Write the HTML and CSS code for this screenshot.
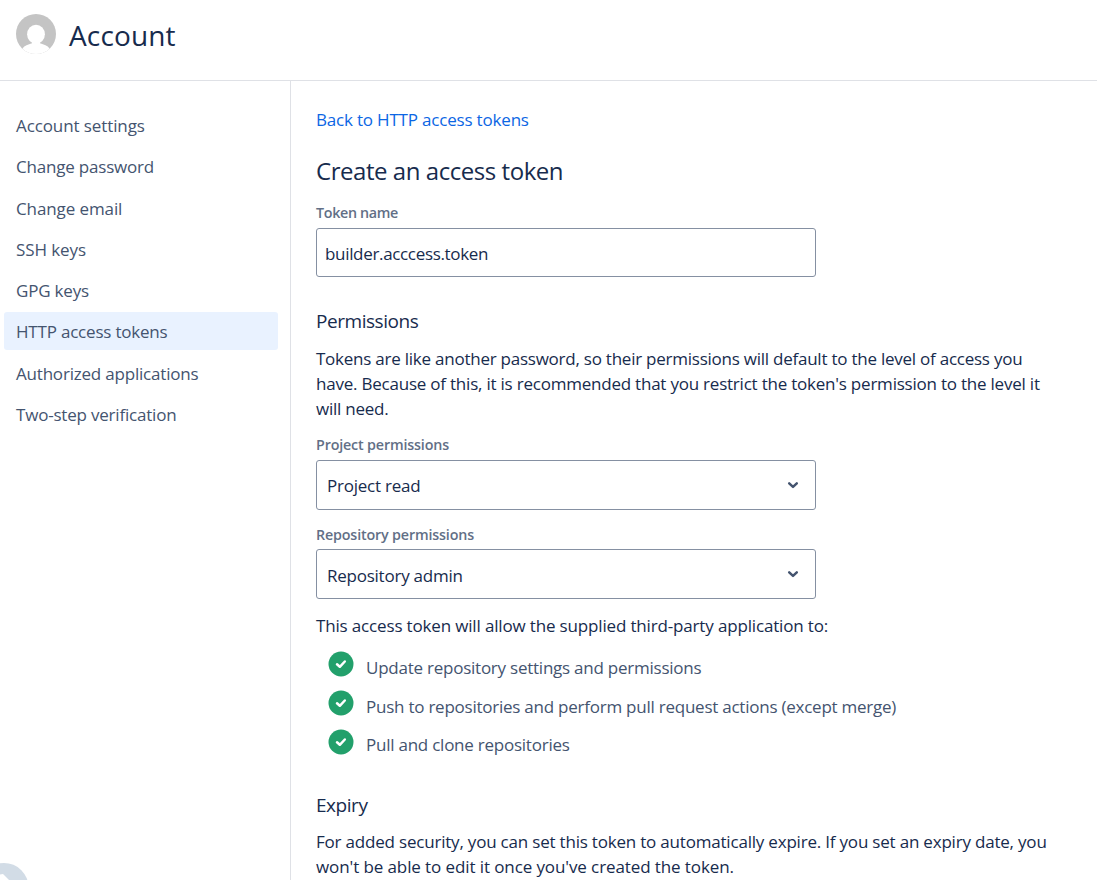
FILE: index.html
```
<!DOCTYPE html>
<html lang="en">
<head>
<meta charset="utf-8">
<title>Account</title>
<link rel="stylesheet" href="styles.css">
</head>
<body>
<header class="page-header">
  <svg class="avatar" viewBox="0 0 40 40"><defs><clipPath id="round"><circle cx="20" cy="20" r="20"/></clipPath></defs><g clip-path="url(#round)"><rect width="40" height="40" fill="#c4c4c4"/><ellipse cx="20" cy="20.300" rx="8.900" ry="9.600" fill="#fff"/><path d="M16 27v2.300C12 30.500 8.500 31.500 6.500 34.500L2 42h36l-4.500-7.500C31.500 31.500 28 30.500 24 29.300V27z" fill="#fff"/></g></svg>
  <h1 class="page-title">Account</h1>
</header>
<div class="page-body">
  <nav class="sidebar">
    <a class="nav-item wide">Account settings</a>
    <a class="nav-item">Change password</a>
    <a class="nav-item wide">Change email</a>
    <a class="nav-item wide">SSH keys</a>
    <a class="nav-item">GPG keys</a>
    <a class="nav-item selected">HTTP access tokens</a>
    <a class="nav-item">Authorized applications</a>
    <a class="nav-item">Two-step verification</a>
  </nav>
  <main class="content">
    <a class="back">Back to HTTP access tokens</a>
    <h2 class="title">Create an access token</h2>
    <label class="label token-label" for="token">Token name</label>
    <input class="field" id="token" type="text" value="builder.acccess.token" spellcheck="false">
    <h3 class="subtitle permissions">Permissions</h3>
    <p class="text intro">Tokens are like another password, so their permissions will default to the level of access you<br><span class="wider">have. Because of this, it is recommended that you restrict the token's permission to the level it</span><br>will need.</p>
    <div class="label">Project permissions</div>
    <div class="select"><span>Project read</span><svg class="chevron" viewBox="0 0 12 8"><path d="M2.200 2.300 6 5.900 9.800 2.300"/></svg></div>
    <div class="label">Repository permissions</div>
    <div class="select low"><span>Repository admin</span><svg class="chevron" viewBox="0 0 12 8"><path d="M2.200 2.300 6 5.900 9.800 2.300"/></svg></div>
    <p class="text allow">This access token will allow the supplied third-party application to:</p>
    <ul class="grants">
      <li><svg class="tick" viewBox="0 0 26 26"><circle cx="13" cy="13" r="12.500"/><path d="m9 13.300 2.800 2.500 5-5.300"/></svg><span>Update repository settings and permissions</span></li>
      <li><svg class="tick" viewBox="0 0 26 26"><circle cx="13" cy="13" r="12.500"/><path d="m9 13.300 2.800 2.500 5-5.300"/></svg><span>Push to repositories and perform pull request actions (except merge)</span></li>
      <li><svg class="tick" viewBox="0 0 26 26"><circle cx="13" cy="13" r="12.500"/><path d="m9 13.300 2.800 2.500 5-5.300"/></svg><span>Pull and clone repositories</span></li>
    </ul>
    <h3 class="subtitle">Expiry</h3>
    <p class="text expiry">For added security, you can set this token to automatically expire. If you set an expiry date, you<br><span class="last-line">won't be able to edit it once you've created the token.</span></p>
  </main>
</div>
<svg class="corner" viewBox="0 0 30 18"><circle cx="4" cy="25.500" r="24.500" fill="#d2dce6"/><path d="M-5 18 0 12.500 3 12 9 18z" fill="#fff"/></svg>
</body>
</html>
```

FILE: styles.css
```
* { box-sizing: border-box; }
html, body { height: 100%; overflow: hidden; }
body {
  margin: 0;
  background: #fff;
  color: #172b4d;
  font: 17px/25px "Open Sans", "Noto Sans", sans-serif;
  letter-spacing: -0.24px;
  display: flex;
  flex-direction: column;
}
h1, h2, h3, p, ul { margin: 0; padding: 0; font-weight: 400; }
.page-header {
  height: 81px;
  flex: none;
  display: flex;
  align-items: flex-start;
  gap: 13px;
  padding: 14px 16px 0;
  border-bottom: 1px solid #dfe1e6;
}
.avatar { width: 40px; height: 40px; }
.page-title { font-size: 28px; line-height: 42px; letter-spacing: 0.15px; }
.page-body { flex: 1; display: flex; min-height: 0; }
.sidebar {
  width: 291px;
  flex: none;
  padding: 25px 12px 0 4px;
  border-right: 1px solid #dfe1e6;
  display: flex;
  flex-direction: column;
  gap: 3.25px;
}
.nav-item {
  height: 38px;
  flex: none;
  padding-left: 12px;
  line-height: 40px;
  color: #44546f;
  border-radius: 3px;
  letter-spacing: -0.2px;
}
.nav-item.wide { letter-spacing: -0.1px; }
.selected { background: #e9f2ff; }
.content { padding: 26px 0 0 25px; width: 806px; }
.back { display: block; color: #0c66e4; letter-spacing: -0.19px; }
.title { margin-top: 24px; font-size: 24px; line-height: 30px; letter-spacing: -0.45px; }
.label {
  display: block;
  font-size: 14.3px;
  font-weight: 600;
  line-height: 20px;
  letter-spacing: -0.16px;
  color: #626f86;
}
.token-label { margin-top: 17px; letter-spacing: -0.33px; }
.field {
  display: block;
  width: 500px;
  height: 49px;
  margin-top: 5px;
  padding: 2px 8px 0;
  border: 1px solid #8590a2;
  border-radius: 3px;
  background: #fff;
  color: inherit;
  font: inherit;
  letter-spacing: -0.33px;
}
.subtitle { font-size: 19px; line-height: 26px; letter-spacing: -0.45px; }
.permissions { margin-top: 31px; }
.text { white-space: nowrap; }
.intro { margin: 12px 0 14px; letter-spacing: -0.24px; }
.wider { letter-spacing: -0.22px; }
.select {
  width: 500px;
  height: 50px;
  margin: 5px 0 15px;
  padding: 0 16px 0 10px;
  border: 1px solid #8590a2;
  border-radius: 3px;
  display: flex;
  align-items: center;
  justify-content: space-between;
}
.select.low { margin: 4px 0 14px; }
.select.low span { padding-top: 2px; }
.chevron { width: 12px; height: 8px; fill: none; stroke: #44546f; stroke-width: 2.5; stroke-linecap: round; stroke-linejoin: round; }
.allow { letter-spacing: -0.16px; }
.grants {
  list-style: none;
  margin: 13px 0 25px 12px;
  color: #44546f;
  display: grid;
  grid-auto-rows: 38.75px;
}
.grants li { display: flex; align-items: flex-start; gap: 12px; white-space: nowrap; }
.grants span { padding-top: 4px; }
.grants li:last-child span { padding-top: 3px; }
.tick { width: 26px; height: 26px; }
.tick circle { fill: #22a06b; }
.tick path { fill: none; stroke: #fff; stroke-width: 2.5; stroke-linecap: round; stroke-linejoin: round; }
.expiry { margin-top: 11px; letter-spacing: -0.2px; }
.last-line { letter-spacing: -0.1px; }
.corner { position: absolute; left: 0; bottom: 0; width: 30px; height: 18px; }
```
